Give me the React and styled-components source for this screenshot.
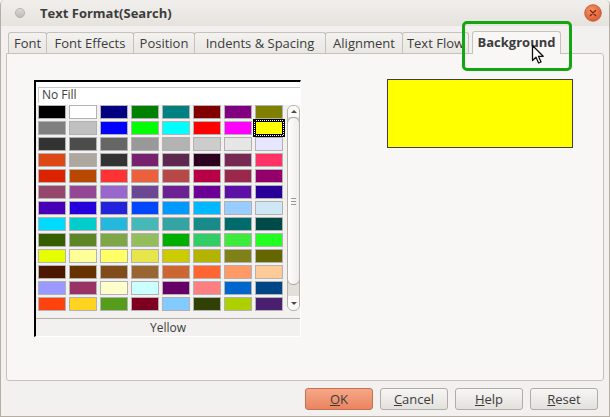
import React from 'react';
import styled, { createGlobalStyle, css } from 'styled-components';

const GlobalStyle = createGlobalStyle`
  html, body {
    margin: 0;
    padding: 0;
    background: #f2f1f0;
  }
  body {
    font-family: "Open Sans", "DejaVu Sans", sans-serif;
    font-size: 13px;
    color: #3c3c3c;
  }
  * {
    box-sizing: border-box;
  }
`;

const COLORS = [
  '#000000', '#FFFFFF', '#000080', '#008000', '#008080', '#800000', '#800080', '#808000',
  '#808080', '#C0C0C0', '#0000FF', '#00FF00', '#00FFFF', '#FF0000', '#FF00FF', '#FFFF00',
  '#333333', '#4C4C4C', '#666666', '#999999', '#B3B3B3', '#CCCCCC', '#E6E6E6', '#E6E6FF',
  '#DD4814', '#AEA79F', '#333333', '#77216F', '#5E2750', '#2C001E', '#772953', '#FF3366',
  '#DC2300', '#B84700', '#FF3333', '#EB613D', '#B84747', '#B80047', '#99284C', '#94006B',
  '#94476B', '#944794', '#9966CC', '#6B4794', '#6B2394', '#6B0094', '#5E11A6', '#280099',
  '#4700B8', '#2300DC', '#2323DC', '#0047FF', '#0099FF', '#00B8FF', '#99CCFF', '#CFE7F5',
  '#00DCFF', '#00CCCC', '#23B8DC', '#47B8B8', '#33A3A3', '#198A8A', '#006B6B', '#004A4A',
  '#355E00', '#5C8526', '#7DA647', '#94BD5E', '#00AE00', '#33CC66', '#3DEB3D', '#23FF23',
  '#E6FF00', '#FFFF99', '#FFFF66', '#E6E64C', '#CCCC00', '#B3B300', '#808019', '#666600',
  '#4C1900', '#663300', '#804C19', '#996633', '#CC6633', '#FF6633', '#FF9966', '#FFCC99',
  '#9999FF', '#993366', '#FFFFCC', '#CCFFFF', '#660066', '#FF8080', '#0066CC', '#004586',
  '#FF420E', '#FFD320', '#579D1C', '#7E0021', '#83CAFF', '#314004', '#AECF00', '#4B1F6F',
];

const SELECTED = 15;

// tab label + width in px (tabs overlap by 1px)
const TABS = [
  ['Font', 39],
  ['Font Effects', 88],
  ['Position', 62],
  ['Indents & Spacing', 132],
  ['Alignment', 78],
  ['Text Flow', 67],
];

const Window = styled.div`
  position: relative;
  width: 610px;
  height: 417px;
  display: flex;
  flex-direction: column;
  background: #f2f1f0;
  border: 1px solid #b6aea2;
  border-top: none;
  border-radius: 5px 5px 0 0;
  overflow: hidden;
`;

const TitleBar = styled.div`
  height: 26px;
  flex: none;
  display: flex;
  align-items: center;
  padding-left: 13px;
  background: linear-gradient(#f1efec, #e6e3de);
`;

const Title = styled.div`
  margin-left: 14px;
  font-weight: bold;
  font-size: 13px;
  color: #3c3c3c;
`;

const CloseButton = styled.svg`
  margin-left: auto;
  margin-right: 7px;
`;

const Content = styled.div`
  flex: 1;
  display: flex;
  flex-direction: column;
  padding: 5px 5px 0 5px;
`;

const TabStrip = styled.div`
  height: 22px;
  flex: none;
  display: flex;
  align-items: flex-end;
  padding-left: 2px;
`;

const Tab = styled.div`
  width: ${p => p.$w}px;
  height: 21px;
  display: flex;
  align-items: center;
  justify-content: center;
  border: 1px solid #c6c1b9;
  border-bottom: none;
  border-radius: 3px 3px 0 0;
  margin-right: -1px;
  background: linear-gradient(#f3f2f0, #e9e7e3);
  white-space: nowrap;
  ${p => p.$active && css`
    height: 23px;
    margin-left: 4px;
    margin-bottom: -1px;
    padding-bottom: 2px;
    font-weight: bold;
    background: #f8f7f6;
    position: relative;
    z-index: 2;
  `}
`;

const Panel = styled.div`
  flex: 1;
  display: flex;
  justify-content: space-between;
  align-items: flex-start;
  padding: 26px 30px 0 27px;
  border: 1px solid #c6c1b9;
  border-radius: 0 3px 3px 3px;
  background: #f8f7f6;
`;

const ColorBox = styled.div`
  width: 267px;
  display: flex;
  flex-direction: column;
  background: #f2f1f0;
  border-top: 2px solid #000;
  border-left: 2px solid #000;
  border-right: 1px solid #fff;
  border-bottom: 1px solid #fff;
`;

const NoFillRow = styled.div`
  height: 23px;
  background: #fff;
  padding: 5px 0 0 2px;
`;

const NoFillField = styled.div`
  height: 16px;
  border-top: 1px solid #c8c8c8;
  border-left: 1px solid #c8c8c8;
  padding-left: 3px;
  font-size: 12px;
  line-height: 14px;
  color: #3c3c3c;
`;

const GridArea = styled.div`
  display: flex;
  gap: 4px;
  padding: 0 0 0 2px;
`;

const SwatchGrid = styled.div`
  display: grid;
  grid-template-columns: repeat(8, 28px);
  grid-auto-rows: 14px;
  column-gap: 3px;
  row-gap: 2px;
`;

const Swatch = styled.div`
  background: ${p => p.$color};
  border: 1px solid #b2b2b2;
  ${p => p.$selected && css`
    border-color: #000;
    box-shadow: 0 0 0 1px #fff, 0 0 0 2px #000;
    outline: 1px dotted #000;
  `}
`;

const ScrollTrack = styled.div`
  width: 13px;
  height: 206px;
  display: flex;
  flex-direction: column;
  border: 1px solid #b5b0a8;
  border-radius: 6px;
  background: #e3e0dc;
  overflow: hidden;
`;

const ScrollArrow = styled.div`
  height: ${p => (p.$down ? 14 : 11)}px;
  flex: none;
  display: flex;
  align-items: center;
  justify-content: center;
  background: #fbfaf9;
  &::after {
    content: '';
    border-left: 3px solid transparent;
    border-right: 3px solid transparent;
    ${p => (p.$down ? 'border-top: 3px solid #4a4a4a;' : 'border-bottom: 3px solid #4a4a4a;')}
  }
`;

const Thumb = styled.div`
  height: 168px;
  flex: none;
  display: flex;
  flex-direction: column;
  align-items: center;
  justify-content: center;
  gap: 2px;
  border: 1px solid #aaa59d;
  border-radius: 6px;
  margin: 0 -1px;
  background: linear-gradient(90deg, #fdfdfc, #efedea);
`;

const Grip = styled.span`
  width: 5px;
  height: 1px;
  background: #9c978f;
`;

const Trough = styled.div`
  flex: 1;
`;

const Separator = styled.div`
  margin-top: 7px;
  height: 1px;
  background: #b4b0aa;
`;

const ColorName = styled.div`
  height: 17px;
  text-align: center;
  font-size: 12px;
  line-height: 18px;
  color: #3c3c3c;
`;

const Preview = styled.div`
  width: 186px;
  height: 69px;
  margin-top: -1px;
  background: #ffff00;
  border: 1px solid #404040;
`;

const Footer = styled.div`
  flex: none;
  display: flex;
  justify-content: flex-end;
  gap: 7px;
  padding: 7px 6px 6px 0;
`;

const Button = styled.button`
  width: 68px;
  height: 22px;
  padding: 0;
  font-family: "Open Sans", "DejaVu Sans", sans-serif;
  font-size: 13px;
  color: #3c3c3c;
  border: 1px solid #b1aca4;
  border-radius: 3px;
  background: linear-gradient(#f7f6f5, #e3e1dd);
  ${p => p.$default && css`
    border-color: #c4714f;
    background: linear-gradient(#f7a787, #ea8460);
  `}
`;

const Highlight = styled.div`
  position: absolute;
  left: 461px;
  top: 21px;
  width: 110px;
  height: 50px;
  border: 3px solid #12a612;
  border-radius: 5px;
  z-index: 5;
`;

const Cursor = styled.svg`
  position: absolute;
  left: 530px;
  top: 44px;
  z-index: 6;
`;

const WindowDot = () => (
  <svg width="12" height="12" viewBox="0 0 12 12">
    <defs>
      <linearGradient id="dot" x1="0" y1="0" x2="0" y2="1">
        <stop offset="0" stopColor="#dcdad6" />
        <stop offset="1" stopColor="#bcbab5" />
      </linearGradient>
    </defs>
    <circle cx="6" cy="6" r="4.6" fill="url(#dot)" stroke="#b0ada8" strokeWidth="0.8" />
  </svg>
);

const App = () => (
  <>
    <GlobalStyle />
    <Window>
      <TitleBar>
        <WindowDot />
        <Title>Text Format(Search)</Title>
        <CloseButton width="18" height="18" viewBox="0 0 18 18">
          <defs>
            <radialGradient id="close" cx="0.4" cy="0.35" r="0.7">
              <stop offset="0" stopColor="#f7946a" />
              <stop offset="1" stopColor="#d9582e" />
            </radialGradient>
          </defs>
          <circle cx="9" cy="9" r="8.3" fill="url(#close)" stroke="#c25029" strokeWidth="0.8" />
          <path d="M6.4 6.4 L11.6 11.6 M11.6 6.4 L6.4 11.6" stroke="#7c2c12" strokeWidth="1.4" strokeLinecap="round" />
        </CloseButton>
      </TitleBar>

      <Content>
        <TabStrip>
          {TABS.map(([t, w]) => <Tab key={t} $w={w}>{t}</Tab>)}
          <Tab $active $w={89}>Background</Tab>
        </TabStrip>

        <Panel>
          <ColorBox>
            <NoFillRow>
              <NoFillField>No Fill</NoFillField>
            </NoFillRow>
            <GridArea>
              <SwatchGrid>
                {COLORS.map((c, i) => (
                  <Swatch key={i} $color={c} $selected={i === SELECTED} />
                ))}
              </SwatchGrid>
              <ScrollTrack>
                <ScrollArrow />
                <Thumb>
                  <Grip />
                  <Grip />
                  <Grip />
                </Thumb>
                <Trough />
                <ScrollArrow $down />
              </ScrollTrack>
            </GridArea>
            <Separator />
            <ColorName>Yellow</ColorName>
          </ColorBox>
          <Preview />
        </Panel>

        <Footer>
          <Button $default><u>O</u>K</Button>
          <Button><u>C</u>ancel</Button>
          <Button><u>H</u>elp</Button>
          <Button><u>R</u>eset</Button>
        </Footer>
      </Content>

      <Highlight />
      <Cursor width="14" height="21" viewBox="0 0 14 21">
        <path
          d="M1.5 1.5 L1.5 16.5 L5 13.2 L7.6 19 L10 18 L7.5 12.3 L12.2 12.3 Z"
          fill="#fff"
          stroke="#111"
          strokeWidth="1.3"
          strokeLinejoin="round"
        />
      </Cursor>
    </Window>
  </>
);

export default App;
